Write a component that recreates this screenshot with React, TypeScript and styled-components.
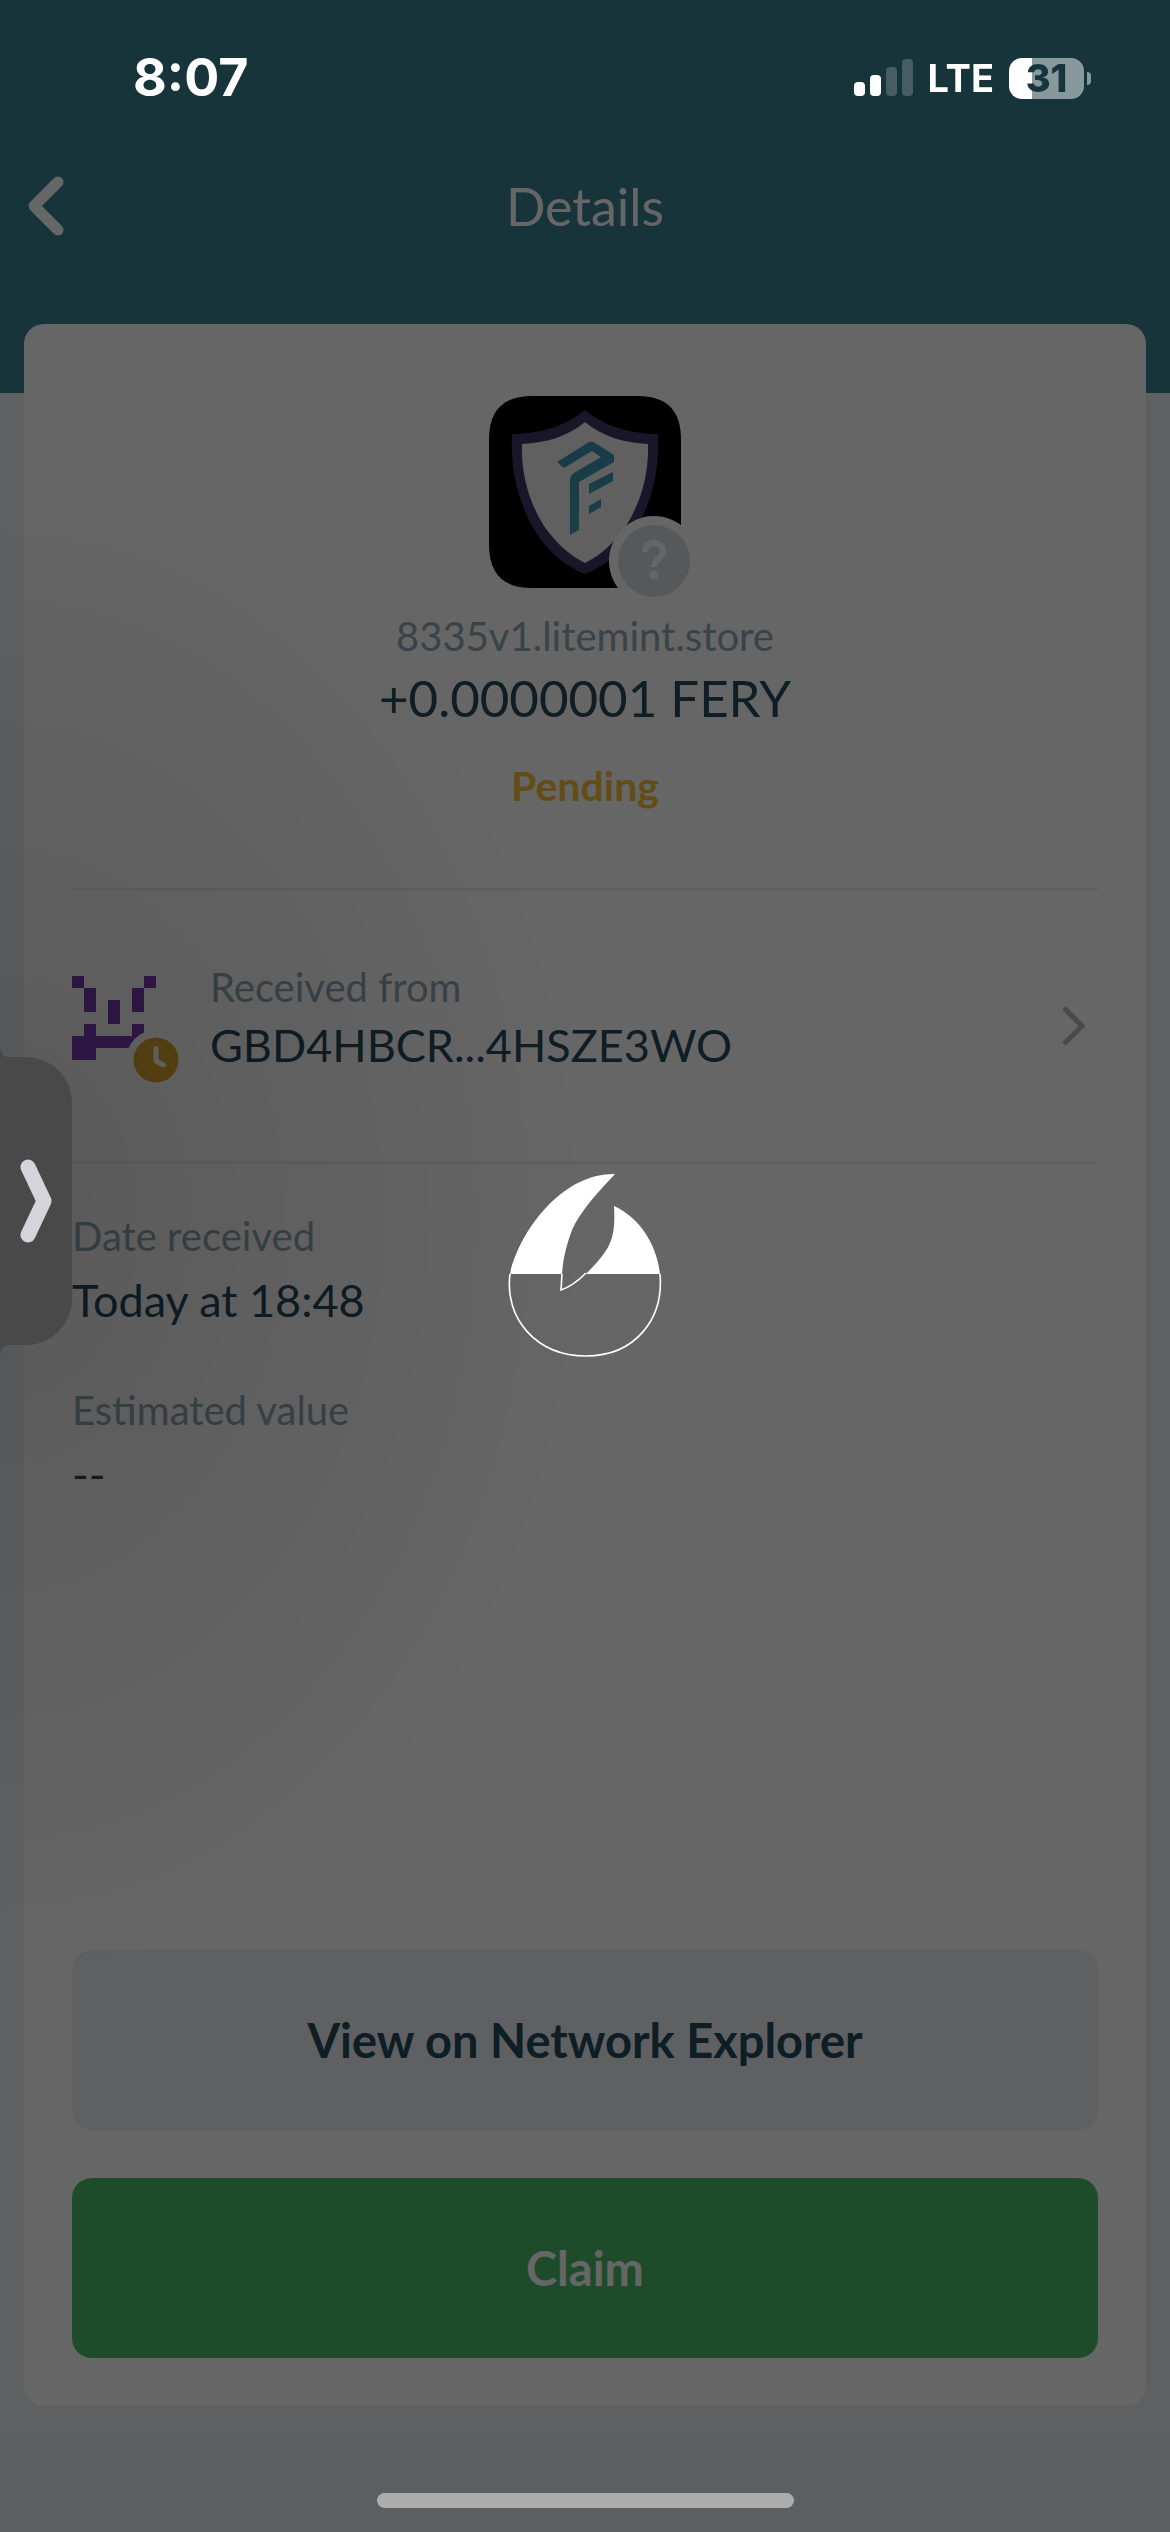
import React from "react";
import styled, { createGlobalStyle } from "styled-components";

const color = {
  teal: "#3c8294",
  ink: "#26495e",
  muted: "#8fa7b5",
  amber: "#f9bd3a",
  amberDeep: "#e0a82e",
  green: "#4bbe6c",
  purple: "#7d3cb4",
  line: "#ebf0f3",
  soft: "#ebf1f4",
  page: "#eef1f5",
  footer: "#e4edef",
  tab: "#484948",
};

const GlobalStyle = createGlobalStyle`
  *, *::before, *::after { box-sizing: border-box; }
  body {
    margin: 0;
    background: ${color.page};
    font-family: Lato, "Liberation Sans", sans-serif;
  }
  h1, p, dl, dd { margin: 0; }
  button { font-family: inherit; border: 0; padding: 0; cursor: pointer; }
  svg { display: block; }
`;

const Screen = styled.div`
  position: relative;
  min-height: 100vh;
  display: flex;
  flex-direction: column;
  background: linear-gradient(${color.teal} 393px, ${color.page} 393px);
`;

const StatusBar = styled.header`
  position: relative;
  z-index: 2;
  height: 140px;
  padding: 16px 79px 0 133px;
  display: flex;
  align-items: center;
  justify-content: space-between;
  color: #fff;
  font-family: Inter, "Liberation Sans", sans-serif;
`;

const Clock = styled.time`
  font-size: 52px;
  line-height: 60px;
  font-weight: 700;
`;

const StatusIcons = styled.div`
  display: flex;
  align-items: center;
  gap: 15px;
`;

const Carrier = styled.span`
  font-size: 38px;
  line-height: 48px;
  font-weight: 700;
`;

const Battery = styled.div`
  display: flex;
  align-items: center;
  gap: 3px;
`;

const BatteryBody = styled.div<{ $level: number }>`
  width: 75px;
  height: 41px;
  border-radius: 13px;
  text-align: center;
  color: #18343c;
  font-size: 38px;
  line-height: 41px;
  font-weight: 800;
  background: linear-gradient(to right, #fff ${(p) => p.$level}%, #88999e ${(p) => p.$level}%);
`;

const BatteryTip = styled.div`
  width: 4px;
  height: 13px;
  border-radius: 0 4px 4px 0;
  background: #88999e;
`;

const NavBar = styled.nav`
  height: 132px;
  padding: 0 24px;
  display: grid;
  grid-template-columns: 48px 1fr 48px;
  align-items: center;
  color: #fff;
`;

const BackButton = styled.button`
  background: none;
  color: inherit;
`;

const Title = styled.h1`
  font-size: 52px;
  line-height: 64px;
  font-weight: 400;
  text-align: center;
`;

const Card = styled.main`
  flex: 1;
  margin: 52px 24px 24px;
  padding: 72px 48px 48px;
  border-radius: 20px;
  background: #fff;
  display: flex;
  flex-direction: column;
`;

const Summary = styled.section`
  display: flex;
  flex-direction: column;
  align-items: center;
  padding-bottom: 78px;
  border-bottom: 3px solid ${color.line};
`;

const AssetLogo = styled.div`
  position: relative;
  width: 192px;
  height: 192px;
  margin-bottom: 24px;
`;

const AssetBadge = styled.div`
  position: absolute;
  right: -18px;
  bottom: -18px;
`;

const Label = styled.p`
  font-size: 40px;
  line-height: 48px;
  color: ${color.muted};
`;

const Amount = styled.p`
  margin-top: 6px;
  font-size: 51px;
  line-height: 64px;
  color: ${color.ink};
`;

const Status = styled.p`
  margin-top: 32px;
  font-size: 41px;
  line-height: 48px;
  font-weight: 700;
  color: ${color.amber};
`;

const SenderRow = styled.button`
  display: flex;
  align-items: center;
  width: 100%;
  padding: 72px 12px 88px 0;
  border-bottom: 3px solid ${color.line};
  background: none;
  text-align: left;
`;

const Avatar = styled.span`
  position: relative;
  width: 84px;
  height: 84px;
`;

const AvatarBadge = styled.span`
  position: absolute;
  left: 54px;
  top: 54px;
`;

const SenderText = styled.span`
  flex: 1;
  display: flex;
  flex-direction: column;
  gap: 6px;
  margin-left: 54px;
`;

const Value = styled.span`
  font-size: 45px;
  line-height: 56px;
  color: ${color.ink};
`;

const Chevron = styled.svg`
  margin-top: 16px;
`;

const Facts = styled.dl`
  display: flex;
  flex-direction: column;
  gap: 58px;
  padding: 48px 0;
`;

const Fact = styled.div`
  display: flex;
  flex-direction: column;
  gap: 12px;
`;

const Actions = styled.div`
  margin-top: auto;
  display: flex;
  flex-direction: column;
  gap: 48px;
`;

const ActionButton = styled.button<{ $primary?: boolean }>`
  height: 180px;
  border-radius: 20px;
  font-size: 47px;
  line-height: 56px;
  font-weight: 700;
  color: ${(p) => (p.$primary ? "#fff" : color.ink)};
  background: ${(p) => (p.$primary ? color.green : color.soft)};
`;

const HomeArea = styled.footer`
  height: 102px;
  padding-top: 63px;
  background: ${color.footer};
`;

const HomeIndicator = styled.div`
  position: relative;
  z-index: 2;
  width: 417px;
  height: 15px;
  margin: 0 auto;
  border-radius: 8px;
  background: #acacac;
`;

const Overlay = styled.div`
  position: fixed;
  inset: 0;
  z-index: 1;
  display: flex;
  align-items: center;
  justify-content: center;
  background:
    radial-gradient(600px 780px at 0 1220px, rgba(0, 0, 0, 0.12), rgba(0, 0, 0, 0)),
    rgba(0, 0, 0, 0.6);
`;

const SideTab = styled.button`
  position: fixed;
  left: 0;
  top: 1057px;
  z-index: 3;
  width: 72px;
  height: 288px;
  padding-left: 20px;
  border-radius: 0 46px 46px 0;
  background: ${color.tab};

  &::before,
  &::after {
    content: "";
    position: absolute;
    left: 0;
    width: 8px;
    height: 12px;
  }
  &::before {
    bottom: 100%;
    background: radial-gradient(8px 12px at 100% 0, transparent 98%, ${color.tab});
  }
  &::after {
    top: 100%;
    background: radial-gradient(8px 12px at 100% 100%, transparent 98%, ${color.tab});
  }
`;

const SignalIcon = () => (
  <svg width="59" height="38" viewBox="0 0 59 38" aria-hidden="true">
    <rect x="0" y="23" width="11" height="14" rx="4" fill="#fff" />
    <rect x="16" y="16" width="11" height="21" rx="4" fill="#fff" />
    <rect x="32" y="8" width="11" height="29" rx="4" fill="#465d63" />
    <rect x="48" y="0" width="11" height="37" rx="4" fill="#465d63" />
  </svg>
);

const BackIcon = () => (
  <svg width="44" height="62" viewBox="0 0 44 62" aria-hidden="true">
    <path d="M34 7 10 31 34 55" fill="none" stroke="currentColor" strokeWidth="11" strokeLinecap="round" strokeLinejoin="round" />
  </svg>
);

const ShieldLogo = () => (
  <svg width="192" height="192" viewBox="0 0 192 192" aria-hidden="true">
    <defs>
      <linearGradient id="mark" x1="0" y1="0" x2="0" y2="1">
        <stop offset="0" stopColor="#3f93b4" />
        <stop offset="1" stopColor="#3fa0b0" />
      </linearGradient>
    </defs>
    <path d="M44 0H148C178 0 192 14 192 44V148C192 178 178 192 148 192H44C14 192 0 178 0 148V44C0 14 14 0 44 0Z" fill="#000" />
    <path d="M96 14C114 29 140 38 169 38C171 75 162 108 146 135C133 156 116 170 96 178C76 170 59 156 46 135C30 108 21 75 23 38C52 38 78 29 96 14Z" fill="#3d3765" />
    <path d="M96 26C113 40 134 47 159 48C160 78 152 106 137 130C125 147 112 159 96 167C80 159 67 147 55 130C40 106 32 78 33 48C58 47 79 40 96 26Z" fill="#eef0ee" />
    <g fill="url(#mark)">
      <path d="M68 66 100 46Q103 45 106 47L125 59V66L90 86V134L81 139V84Q81 80 85 77L112 61 103 55 75 72Z" />
      <path d="M100 88 124 76V85L100 98Z" />
      <path d="M100 110 112 103V111L100 118Z" />
    </g>
  </svg>
);

const QuestionBadge = () => (
  <svg width="90" height="90" viewBox="0 0 90 90" aria-hidden="true">
    <circle cx="45" cy="45" r="45" fill="#fff" />
    <circle cx="45" cy="45" r="36" fill="#dadce1" />
    <path d="M36 36C36 24 54 24 54 35C54 43 45 43 45 51" fill="none" stroke="#fff" strokeWidth="6" />
    <circle cx="45" cy="59" r="4.5" fill="#fff" />
  </svg>
);

const cells = ["1000001", "0100010", "0101010", "0001000", "0100010", "1111111", "1100011"];

const Identicon = () => (
  <svg width="84" height="84" viewBox="0 0 7 7" shapeRendering="crispEdges" aria-hidden="true">
    {cells.flatMap((row, y) =>
      [...row].map((c, x) =>
        c === "1" ? <rect key={`${x}-${y}`} x={x} y={y} width="1" height="1" fill={color.purple} /> : null
      )
    )}
  </svg>
);

const ClockBadge = () => (
  <svg width="60" height="60" viewBox="0 0 60 60" aria-hidden="true">
    <circle cx="30" cy="30" r="30" fill="#fff" />
    <circle cx="30" cy="30" r="22.5" fill={color.amberDeep} />
    <path d="M30 18.500V31L37.500 35" fill="none" stroke="#fff" strokeWidth="5" strokeLinecap="round" strokeLinejoin="round" />
  </svg>
);

const LoaderLogo = () => (
  <svg width="154" height="186" viewBox="0 0 154 186" role="img" aria-label="Loading">
    <path d="M2 101C10 62 52 0 107 1C88 21 72 39 64 57C57 76 55 88 54 101Z" fill="#fff" />
    <path d="M106 33C132 45 149 72 152 101H78C85 94 94 84 99 76C106 64 107 52 106 33Z" fill="#fff" />
    <path
      d="M2 101C-4 146 29 183 78 183C127 183 156 146 152 101M54 101 53 117C62 114 70 108 78 100"
      fill="none"
      stroke="#fff"
      strokeWidth="1.600"
    />
  </svg>
);

export default function App() {
  return (
    <>
      <GlobalStyle />
      <Screen>
        <StatusBar>
          <Clock>8:07</Clock>
          <StatusIcons>
            <SignalIcon />
            <Carrier>LTE</Carrier>
            <Battery>
              <BatteryBody $level={31}>31</BatteryBody>
              <BatteryTip />
            </Battery>
          </StatusIcons>
        </StatusBar>

        <NavBar>
          <BackButton aria-label="Back">
            <BackIcon />
          </BackButton>
          <Title>Details</Title>
        </NavBar>

        <Card>
          <Summary>
            <AssetLogo>
              <ShieldLogo />
              <AssetBadge>
                <QuestionBadge />
              </AssetBadge>
            </AssetLogo>
            <Label>8335v1.litemint.store</Label>
            <Amount>+0.0000001 FERY</Amount>
            <Status>Pending</Status>
          </Summary>

          <SenderRow>
            <Avatar>
              <Identicon />
              <AvatarBadge>
                <ClockBadge />
              </AvatarBadge>
            </Avatar>
            <SenderText>
              <Label as="span">Received from</Label>
              <Value>GBD4HBCR...4HSZE3WO</Value>
            </SenderText>
            <Chevron width="24" height="40" viewBox="0 0 24 40" aria-hidden="true">
              <path d="M2 2 20 20 2 38" fill="none" stroke="#b8b8b8" strokeWidth="5" />
            </Chevron>
          </SenderRow>

          <Facts>
            <Fact>
              <Label as="dt">Date received</Label>
              <Value as="dd">Today at 18:48</Value>
            </Fact>
            <Fact>
              <Label as="dt">Estimated value</Label>
              <Value as="dd">--</Value>
            </Fact>
          </Facts>

          <Actions>
            <ActionButton>View on Network Explorer</ActionButton>
            <ActionButton $primary>Claim</ActionButton>
          </Actions>
        </Card>

        <HomeArea>
          <HomeIndicator />
        </HomeArea>

        <Overlay>
          <LoaderLogo />
        </Overlay>

        <SideTab aria-label="Open side panel">
          <svg width="33" height="84" viewBox="0 0 33 84" aria-hidden="true">
            <path d="M8 8 24 42 8 76" fill="none" stroke="#d5d4da" strokeWidth="15" strokeLinecap="round" strokeLinejoin="round" />
          </svg>
        </SideTab>
      </Screen>
    </>
  );
}
